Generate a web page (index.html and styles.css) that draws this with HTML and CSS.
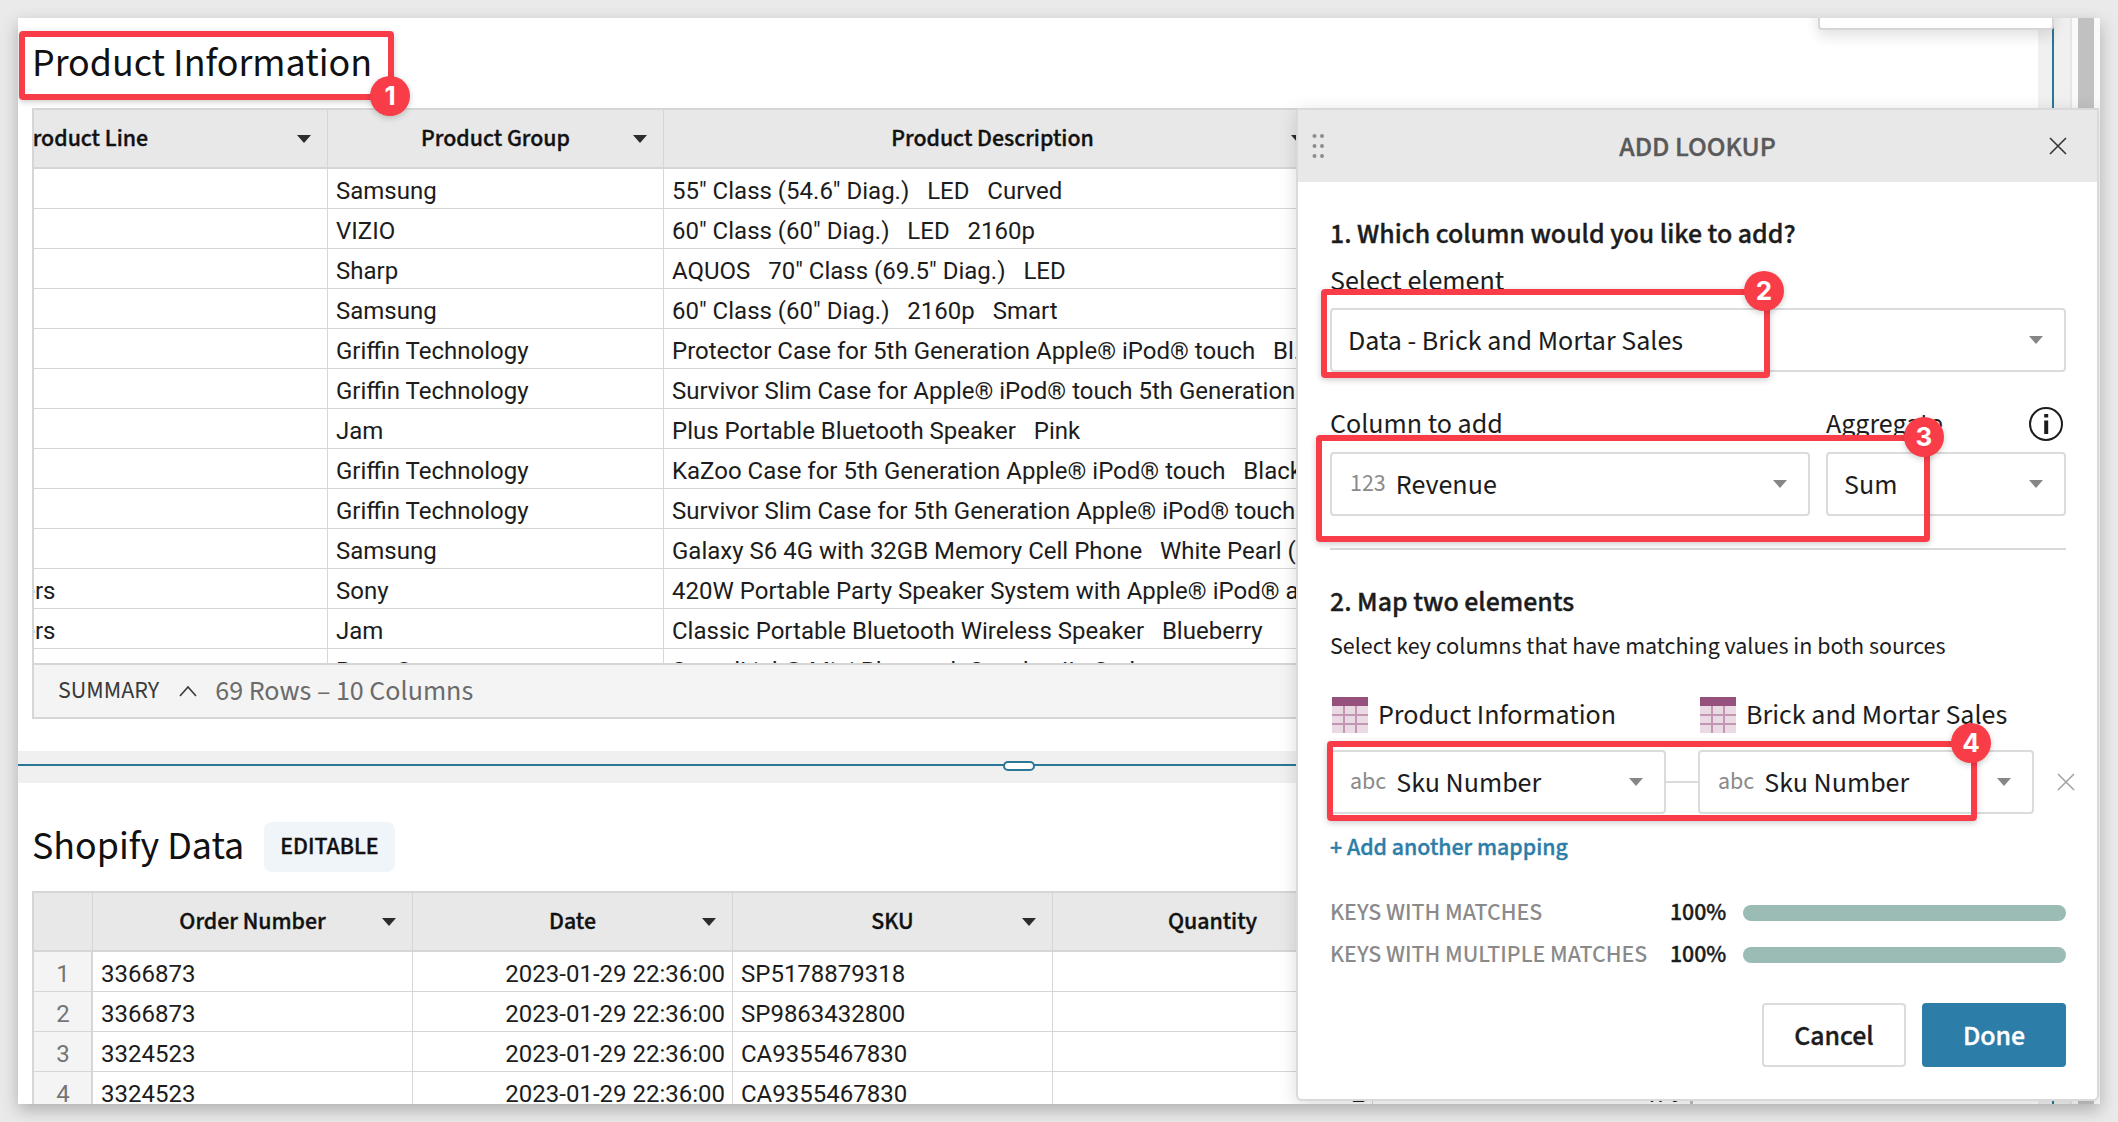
FILE: index.html
```html
<!DOCTYPE html>
<html lang="en">
<head>
<meta charset="utf-8">
<title>Add Lookup</title>
<link rel="stylesheet" href="styles.css">
</head>
<body>
<svg class="sprite" width="0" height="0" aria-hidden="true">
  <symbol id="caret" viewBox="0 0 14 8"><path d="M0 0h14L7 8z" fill="currentColor"/></symbol>
  <symbol id="close" viewBox="0 0 18 18"><path d="M1 1l16 16M17 1l-16 16" fill="none" stroke="currentColor" stroke-width="1.600"/></symbol>
  <symbol id="table" viewBox="0 0 36 36">
    <path d="M0 0h36v36H0z" fill="#e9dae3"/>
    <path d="M0 18h36M0 27h36M12 9v27M24 9v27" stroke="#c397b3" stroke-width="2"/>
    <path d="M0 0h36v9H0z" fill="#95507c"/>
  </symbol>
</svg>

<div class="window">
  <main class="canvas">
    <section class="block block-top">
      <h1 class="title">Product Information</h1>
      <div class="callout callout-1"><span class="badge">1</span></div>
      <div class="grid">
        <div class="grid-scroll grid-scroll-top">
          <table class="data data-products">
            <colgroup><col class="c-line"><col class="c-group"><col class="c-desc"><col></colgroup>
            <thead>
              <tr>
                <th>Product Line<svg class="caret"><use href="#caret"/></svg></th>
                <th>Product Group<svg class="caret"><use href="#caret"/></svg></th>
                <th>Product Description<svg class="caret"><use href="#caret"/></svg></th>
                <th></th>
              </tr>
            </thead>
            <tbody>
              <tr><td></td><td>Samsung</td><td>55" Class (54.6" Diag.)   LED   Curved</td><td></td></tr>
              <tr><td></td><td>VIZIO</td><td>60" Class (60" Diag.)   LED   2160p</td><td></td></tr>
              <tr><td></td><td>Sharp</td><td>AQUOS   70" Class (69.5" Diag.)   LED</td><td></td></tr>
              <tr><td></td><td>Samsung</td><td>60" Class (60" Diag.)   2160p   Smart</td><td></td></tr>
              <tr><td></td><td>Griffin Technology</td><td>Protector Case for 5th Generation Apple® iPod® touch   Bl…</td><td></td></tr>
              <tr><td></td><td>Griffin Technology</td><td>Survivor Slim Case for Apple® iPod® touch 5th Generation</td><td></td></tr>
              <tr><td></td><td>Jam</td><td>Plus Portable Bluetooth Speaker   Pink</td><td></td></tr>
              <tr><td></td><td>Griffin Technology</td><td>KaZoo Case for 5th Generation Apple® iPod® touch   Black</td><td></td></tr>
              <tr><td></td><td>Griffin Technology</td><td>Survivor Slim Case for 5th Generation Apple® iPod® touch</td><td></td></tr>
              <tr><td></td><td>Samsung</td><td>Galaxy S6 4G with 32GB Memory Cell Phone   White Pearl (V…</td><td></td></tr>
              <tr><td>Bluetooth Speakers</td><td>Sony</td><td>420W Portable Party Speaker System with Apple® iPod® a…</td><td></td></tr>
              <tr><td>Bluetooth Speakers</td><td>Jam</td><td>Classic Portable Bluetooth Wireless Speaker   Blueberry</td><td></td></tr>
              <tr><td></td><td>Bose Corp</td><td>SoundLink® Mini Bluetooth Speaker II   Carbon</td><td></td></tr>
            </tbody>
          </table>
        </div>
        <div class="summary">
          <button class="summary-toggle" type="button">SUMMARY
            <svg width="18" height="12" viewBox="0 0 18 12"><path d="M1 11l8-9 8 9" fill="none" stroke="currentColor" stroke-width="1.600"/></svg>
          </button>
          <span class="summary-count">69 Rows – 10 Columns</span>
        </div>
      </div>
    </section>

    <div class="splitter"><span class="splitter-handle"></span></div>

    <section class="block block-bottom">
      <div class="title-row">
        <h2 class="title">Shopify Data</h2>
        <span class="tag">EDITABLE</span>
      </div>
      <div class="grid grid-bottom">
        <table class="data data-orders">
          <colgroup><col class="c-num"><col class="c-320"><col class="c-320"><col class="c-320"><col class="c-320"><col class="c-320"></colgroup>
          <thead>
            <tr>
              <th></th>
              <th>Order Number<svg class="caret"><use href="#caret"/></svg></th>
              <th>Date<svg class="caret"><use href="#caret"/></svg></th>
              <th>SKU<svg class="caret"><use href="#caret"/></svg></th>
              <th>Quantity<svg class="caret"><use href="#caret"/></svg></th>
              <th></th>
            </tr>
          </thead>
          <tbody>
            <tr><th scope="row">1</th><td>3366873</td><td class="right">2023-01-29 22:36:00</td><td>SP5178879318</td><td></td><td></td></tr>
            <tr><th scope="row">2</th><td>3366873</td><td class="right">2023-01-29 22:36:00</td><td>SP9863432800</td><td></td><td></td></tr>
            <tr><th scope="row">3</th><td>3324523</td><td class="right">2023-01-29 22:36:00</td><td>CA9355467830</td><td></td><td></td></tr>
            <tr><th scope="row">4</th><td>3324523</td><td class="right">2023-01-29 22:36:00</td><td>CA9355467830</td><td class="right">2</td><td class="right">479</td></tr>
          </tbody>
        </table>
      </div>
    </section>
  </main>
  <div class="gutter"></div>
  <div class="scrollbar"><div class="scrollbar-thumb"></div></div>
  <div class="popover"></div>

  <aside class="panel">
    <header class="panel-head">
      <svg class="grip" width="12" height="24" viewBox="0 0 12 24" fill="#8c8c8c"><circle cx="2.500" cy="2" r="2"/><circle cx="10" cy="2" r="2"/><circle cx="2.500" cy="12" r="2"/><circle cx="10" cy="12" r="2"/><circle cx="2.500" cy="22" r="2"/><circle cx="10" cy="22" r="2"/></svg>
      <h2 class="panel-title">ADD LOOKUP</h2>
      <button class="icon-btn close" type="button" aria-label="Close"><svg width="18" height="18"><use href="#close"/></svg></button>
    </header>
    <form class="panel-body">
      <h3 class="step">1. Which column would you like to add?</h3>
      <div class="field">
        <label class="label" for="element">Select element</label>
        <div class="picker">
          <select id="element"><option>Data - Brick and Mortar Sales</option></select>
          <svg class="picker-caret"><use href="#caret"/></svg>
        </div>
        <div class="callout callout-2"><span class="badge">2</span></div>
      </div>
      <div class="column-row">
        <div class="field">
          <label class="label" for="column">Column to add</label>
          <div class="picker">
            <span class="type">123</span>
            <select id="column"><option>Revenue</option></select>
            <svg class="picker-caret"><use href="#caret"/></svg>
          </div>
        </div>
        <div class="field">
          <div class="label-row">
            <label class="label" for="aggregate">Aggregate</label>
            <svg class="info" width="36" height="36" viewBox="0 0 36 36"><circle cx="18" cy="18" r="16" fill="none" stroke="#1c1c1c" stroke-width="2"/><path d="M16.200 8h4v3.500h-4zM16.200 14.500h4V28h-4z" fill="#1c1c1c"/></svg>
          </div>
          <div class="picker">
            <select id="aggregate"><option>Sum</option></select>
            <svg class="picker-caret"><use href="#caret"/></svg>
          </div>
        </div>
        <div class="callout callout-3"><span class="badge">3</span></div>
      </div>
      <hr class="rule">
      <h3 class="step">2. Map two elements</h3>
      <p class="hint">Select key columns that have matching values in both sources</p>
      <div class="mapping">
        <label class="source" for="key-left"><svg width="36" height="36"><use href="#table"/></svg>Product Information</label>
        <label class="source source-right" for="key-right"><svg width="36" height="36"><use href="#table"/></svg>Brick and Mortar Sales</label>
        <div class="picker map-left">
          <span class="type">abc</span>
          <select id="key-left"><option>Sku Number</option></select>
          <svg class="picker-caret"><use href="#caret"/></svg>
        </div>
        <span class="link-line"></span>
        <div class="picker">
          <span class="type">abc</span>
          <select id="key-right"><option>Sku Number</option></select>
          <svg class="picker-caret"><use href="#caret"/></svg>
        </div>
        <button class="icon-btn remove" type="button" aria-label="Remove mapping"><svg width="18" height="18"><use href="#close"/></svg></button>
        <div class="callout callout-4"><span class="badge">4</span></div>
      </div>
      <a class="add-link" href="#">+ Add another mapping</a>
      <dl class="stats">
        <dt>KEYS WITH MATCHES</dt><dd>100%</dd><dd class="bar"><span style="width:100%"></span></dd>
        <dt>KEYS WITH MULTIPLE MATCHES</dt><dd>100%</dd><dd class="bar"><span style="width:100%"></span></dd>
      </dl>
      <div class="actions">
        <button class="btn" type="button">Cancel</button>
        <button class="btn btn-primary" type="submit">Done</button>
      </div>
    </form>
  </aside>
</div>
</body>
</html>
```

FILE: styles.css
```css
:root {
  --sans: "Source Sans 3", "Source Sans Pro", "Noto Sans CJK SC", "Noto Sans", sans-serif;
  --line: #d6d6d6;
  --ink: #1c1c1c;
  --red: #f93d48;
  --blue: #2c7da8;
}

* { box-sizing: border-box; }

body {
  margin: 0;
  padding: 18px;
  height: 100vh;
  background: #eaeaea;
  color: var(--ink);
  font-family: var(--sans);
}

.sprite { position: absolute; }

.window {
  position: relative;
  display: flex;
  height: 100%;
  overflow: hidden;
  background: #fff;
}

body::before {
  content: "";
  position: absolute;
  inset: 18px;
  box-shadow: 0 6px 16px rgba(0, 0, 0, 0.26);
}

/* Semibold look on top of the medium weight */
.data thead th, .tag, .step, .panel-title, .stats dd, .btn, .add-link { -webkit-text-stroke: 0.4px currentColor; }

.canvas { flex: 1; min-width: 0; }
.block { position: relative; padding-left: 14px; }

.title {
  margin: 0;
  color: #111;
  font-size: 40px;
  font-weight: 400;
  line-height: 52px;
}

.block-top { padding-top: 20px; padding-bottom: 32px; }
.block-top .grid { margin-top: 18px; }

.grid { border: 2px solid var(--line); border-right: 0; }
.grid-scroll { overflow: hidden; }
.grid-scroll-top { height: 553px; }

.data {
  border-collapse: separate;
  border-spacing: 0;
  table-layout: fixed;
  font-family: Roboto, sans-serif;
  font-size: 24px;
}
.data-products { margin-left: -194px; width: 2400px; }
.data-orders { width: 1658px; }
.c-line { width: 488px; }
.c-group { width: 336px; }
.c-desc { width: 658px; }
.c-num { width: 59px; }
.c-320 { width: 320px; }

.data th, .data td {
  overflow: hidden;
  white-space: pre;
  border-right: 1px solid var(--line);
}
.data thead th {
  position: relative;
  height: 59px;
  padding: 0;
  border-bottom: 2px solid var(--line);
  background: #e8e8e8;
  color: #111;
  font-family: var(--sans);
  font-size: 24px;
  font-weight: 500;
  line-height: 32px;
}
.data td, .data tbody th {
  height: 40px;
  padding: 4px 7px 0 8px;
  border-bottom: 1px solid var(--line);
  line-height: 32px;
}
.data tbody th {
  border-right-width: 2px;
  background: #f4f4f4;
  color: #757575;
  font-weight: 400;
}
.data-orders td:last-child { border-right: 3px solid #bdbdbd; }
.data .right { text-align: right; }

.caret {
  position: absolute;
  top: 25px;
  right: 16px;
  width: 14px;
  height: 8px;
  color: #2b2b2b;
}

.summary {
  display: flex;
  align-items: center;
  gap: 18px;
  height: 54px;
  padding-left: 24px;
  border-top: 2px solid var(--line);
  background: #f4f4f4;
}
.summary-toggle {
  display: flex;
  align-items: center;
  gap: 20px;
  padding: 0;
  border: 0;
  background: none;
  color: #3a3a3a;
  font: 24px/32px var(--sans);
}
.summary-count { color: #6b6b6b; font-size: 28px; line-height: 36px; }

.splitter {
  position: relative;
  height: 32px;
  padding-top: 13px;
  background: #f0f0f0;
}
.splitter::before { content: ""; display: block; height: 2px; background: #2a7797; }
.splitter-handle {
  position: absolute;
  top: 10px;
  left: 985px;
  width: 32px;
  height: 10px;
  border: 2px solid #2a7797;
  border-radius: 5px;
  background: #fff;
}

.block-bottom { padding-top: 38px; }
.title-row { display: flex; align-items: center; gap: 20px; }
.tag {
  padding: 9px 16px;
  border-radius: 8px;
  background: #f0f5f9;
  color: #111;
  font-size: 24px;
  font-weight: 500;
  line-height: 32px;
}
.grid-bottom { margin-top: 18px; border-bottom: 0; }

.gutter {
  width: 34px;
  border-right: 2px solid #e6e6e6;
  background: linear-gradient(90deg, #f0f0f0 14px, #2a7797 14px, #2a7797 16px, #f0f0f0 16px);
}
.scrollbar { width: 28px; padding: 0 6px; background: #fafafa; }
.scrollbar-thumb { height: 100%; background: #c1c1c1; }

.popover {
  position: absolute;
  top: -20px;
  right: 46px;
  width: 236px;
  height: 32px;
  border: 2px solid var(--line);
  border-radius: 4px;
  background: #fff;
  box-shadow: 0 6px 14px rgba(0, 0, 0, 0.12);
}

.panel {
  position: absolute;
  top: 90px;
  right: 1px;
  width: 803px;
  border: 2px solid #d9d9d9;
  border-radius: 4px 0 6px 6px;
  background: #fff;
  box-shadow: 0 4px 18px rgba(0, 0, 0, 0.15);
}
.panel-head {
  display: grid;
  grid-template-columns: 1fr auto 1fr;
  align-items: center;
  height: 72px;
  background: #e8e8e8;
}
.grip { margin-left: 14px; }
.panel-title { margin: 0; padding-top: 2px; color: #595959; font-size: 28px; font-weight: 500; line-height: 36px; }
.icon-btn { display: flex; padding: 0; border: 0; background: none; color: #333; }
.close { justify-self: end; margin-right: 30px; }

.panel-body { padding: 32px 31px 32px 32px; }
.step { margin: 0; font-size: 28px; font-weight: 500; line-height: 40px; }
.field { position: relative; }
.label { display: block; font-size: 28px; line-height: 36px; }
.panel-body > .field { margin-top: 9px; }
.panel-body > .field .label { margin-bottom: 9px; }

.picker {
  display: flex;
  align-items: center;
  height: 64px;
  padding: 0 21px 0 16px;
  border: 2px solid #dbdbdb;
  border-radius: 4px;
  background: #fff;
}
.picker select {
  flex: 1;
  min-width: 0;
  height: 100%;
  padding: 1px 0 0;
  border: 0;
  appearance: none;
  background: none;
  color: var(--ink);
  font: 28px/36px var(--sans);
}
.picker-caret { width: 14px; height: 8px; color: #868686; }
.type { padding: 0 10px 0 2px; color: #8a8a8a; font-size: 24px; line-height: 32px; }

.column-row {
  position: relative;
  display: grid;
  grid-template-columns: 480fr 240fr;
  gap: 16px;
  margin-top: 32px;
}
.column-row .label { padding: 2px 0; }
.column-row > .field > .label, .label-row { height: 40px; margin-bottom: 8px; }
.label-row { display: flex; align-items: center; justify-content: space-between; padding-right: 2px; }

.rule { margin: 32px 0 0; border: 0; border-top: 2px solid #d9d9d9; }
.rule + .step { margin-top: 32px; }
.hint { margin: 9px 0 0; font-size: 24px; line-height: 32px; }

.mapping {
  position: relative;
  display: grid;
  grid-template-columns: 336fr 32px 336fr 32px;
  row-gap: 17px;
  align-items: center;
  margin-top: 34px;
}
.source { display: flex; align-items: center; gap: 10px; padding-left: 2px; font-size: 28px; line-height: 36px; white-space: nowrap; }
.source-right { grid-column: 3 / -1; }
.map-left { grid-column: 1; }
.link-line { height: 2px; background: #dbdbdb; }
.remove { justify-self: end; margin-right: -9px; color: #a3a3a3; }

.add-link {
  display: inline-block;
  margin-top: 18px;
  color: var(--blue);
  font-size: 24px;
  font-weight: 500;
  line-height: 32px;
  text-decoration: none;
}

.stats {
  display: grid;
  grid-template-columns: 340px 57px 1fr;
  align-items: center;
  row-gap: 10px;
  margin: 33px 0 0;
  font-size: 24px;
  font-weight: 500;
  line-height: 32px;
  white-space: nowrap;
}
.stats dt { color: #8a8a8a; }
.stats dd { margin: 0; }
.stats .bar { margin-left: 16px; }
.bar span { display: block; height: 16px; border-radius: 8px; background: #9abcb4; }

.actions { display: flex; justify-content: flex-end; gap: 16px; margin-top: 32px; }
.btn {
  width: 144px;
  height: 64px;
  padding: 1px 0 0;
  border: 2px solid #dbdbdb;
  border-radius: 4px;
  background: #fff;
  color: var(--ink);
  font: 500 28px/36px var(--sans);
}
.btn-primary { border-color: var(--blue); background: var(--blue); color: #fff; }

/* Numbered tutorial callouts laid over the interface */
.callout {
  position: absolute;
  z-index: 2;
  border: 6px solid var(--red);
  border-radius: 4px;
  box-shadow: 0 2px 6px rgba(0, 0, 0, 0.2);
  pointer-events: none;
}
.badge {
  position: absolute;
  display: grid;
  place-items: center;
  width: 40px;
  height: 40px;
  border-radius: 50%;
  background: var(--red);
  color: #fff;
  font: 700 26px/40px Inter, sans-serif;
  box-shadow: 0 2px 6px rgba(0, 0, 0, 0.2);
}
.callout-1 { top: 13px; left: 1px; width: 375px; height: 69px; }
.callout-1 .badge { right: -22px; bottom: -22px; }
.callout-2 { top: 26px; left: -9px; width: 449px; height: 89px; }
.callout-3 { top: 31px; left: -14px; width: 614px; height: 107px; }
.callout-4 { bottom: -7px; left: -3px; width: 650px; height: 80px; }
.callout-2 .badge, .callout-3 .badge, .callout-4 .badge { top: -24px; right: -20px; }
```
